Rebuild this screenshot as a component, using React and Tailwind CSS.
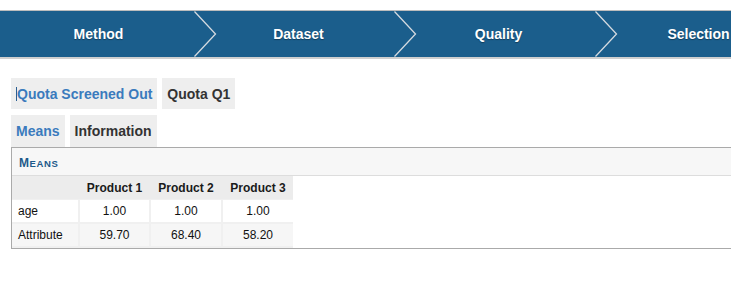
import React from "react";

const steps = ["Method", "Dataset", "Quality", "Selection"];

function Chevron({ left }) {
  return (
    <svg
      className="absolute top-0"
      style={{ left }}
      width="24"
      height="46"
      viewBox="0 0 24 46"
    >
      <polyline
        points="0.5,0.5 21.5,23 0.5,45.5"
        fill="none"
        stroke="#d4dae0"
        strokeWidth="1.3"
      />
    </svg>
  );
}

const rows = [
  ["age", "1.00", "1.00", "1.00"],
  ["Attribute", "59.70", "68.40", "58.20"],
];

const cols = ["w-[66px]", "w-[69px]", "w-[70px]", "w-[70px]"];

export default function App() {
  return (
    <div className="w-[731px] h-[308px] overflow-hidden bg-white font-['Liberation_Sans',Arial,sans-serif]">
      {/* wizard nav */}
      <div className="mt-[10px] w-[800px] border-t border-[#bdbdbd] border-b-2 border-b-[#cfcfcf] bg-[#1b5e8c]">
        <div className="relative flex h-[46px]">
          {steps.map((s) => (
            <div
              key={s}
              className="w-[200px] shrink-0 flex items-center justify-center pr-[3px] text-white font-bold text-[14px] [text-shadow:0_1px_1px_rgba(0,0,0,0.35)]"
            >
              {s}
            </div>
          ))}
          <Chevron left={194} />
          <Chevron left={394} />
          <Chevron left={595} />
        </div>
      </div>

      <div className="ml-[11px] mt-[19px]">
        {/* quota tabs */}
        <div className="flex gap-[5px]">
          <div className="relative h-[31px] pl-[6px] pr-[5px] flex items-center bg-[#eeeeee] text-[14px] font-bold leading-[16px] text-[#3a7bbd]">
            <span className="absolute left-[5px] top-[9px] w-px h-[14px] bg-[#2b5f92]" />
            Quota Screened Out
          </div>
          <div className="h-[31px] px-[5px] flex items-center bg-[#eeeeee] text-[14px] font-bold leading-[16px] text-[#333333]">
            Quota Q1
          </div>
        </div>

        {/* sub tabs */}
        <div className="mt-[6px] flex gap-[5px]">
          <div className="h-[32px] px-[5px] flex items-center bg-[#eeeeee] text-[14px] font-bold leading-[16px] text-[#3a7bbd]">
            Means
          </div>
          <div className="h-[32px] px-[5px] flex items-center bg-[#eeeeee] text-[14px] font-bold leading-[16px] text-[#333333]">
            Information
          </div>
        </div>

        {/* panel */}
        <div className="w-[760px] border border-[#aaaaaa]">
          <div className="h-[28px] border-b border-[#dddddd] bg-[#f7f7f7] pl-[7px] flex items-baseline pt-[9px] font-bold text-[#1d5a8a] leading-none">
            <span className="text-[12px] tracking-[0.6px]">M</span>
            <span className="text-[9.5px] tracking-[0.6px]">EANS</span>
          </div>
          <div className="w-[281px] bg-[#f0f0f0] pb-[2px] text-[12px] leading-[14px] text-[#111111]">
            <div className="flex h-[23px] bg-[#ececec] gap-[2px] font-bold text-[#1a1a1a]">
              <div className={cols[0]} />
              {["Product 1", "Product 2", "Product 3"].map((p, i) => (
                <div key={p} className={`${cols[i + 1]} flex items-center justify-center`}>
                  {p}
                </div>
              ))}
            </div>
            <div className="flex flex-col gap-[2px] pt-[1px]">
              {rows.map((r, ri) => (
                <div key={r[0]} className="flex gap-[2px] h-[22px]">
                  {r.map((c, ci) => (
                    <div
                      key={ci}
                      className={`${cols[ci]} flex items-center ${
                        ci === 0 ? "pl-[6px]" : "justify-center"
                      } ${ri === 0 ? "bg-white" : "bg-[#f6f6f6]"}`}
                    >
                      {c}
                    </div>
                  ))}
                </div>
              ))}
            </div>
          </div>
        </div>
      </div>
    </div>
  );
}
